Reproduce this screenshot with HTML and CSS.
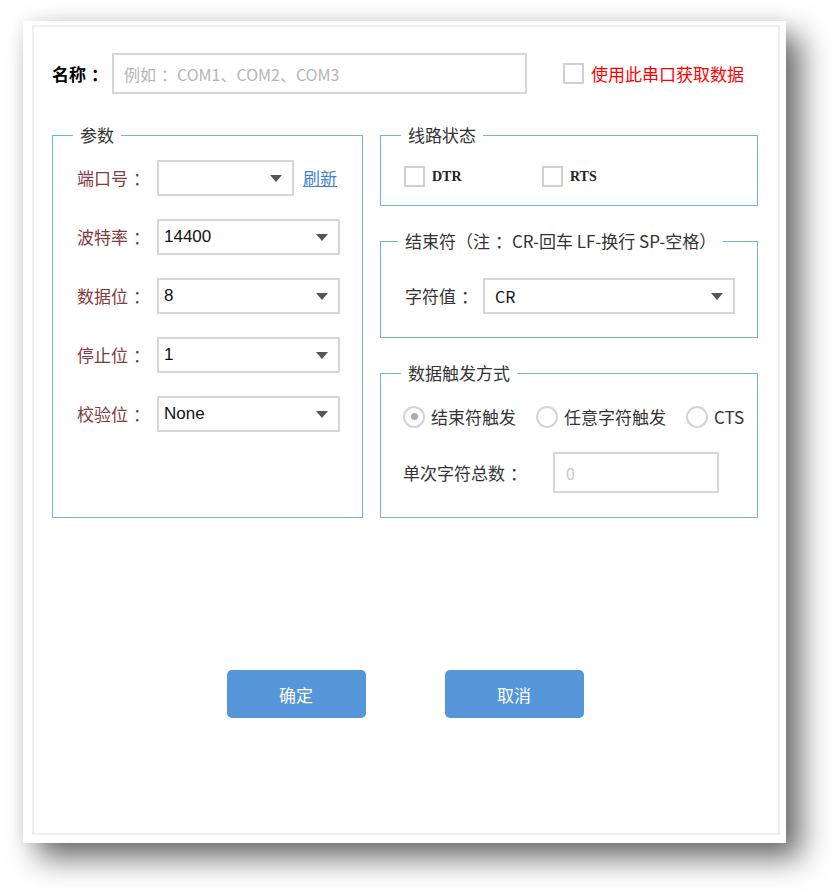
FILE: index.html
```html
<!DOCTYPE html>
<html lang="zh-CN">
<head>
<meta charset="utf-8">
<title>串口设置</title>
<link rel="stylesheet" href="styles.css">
</head>
<body>
<div class="window">
  <div class="frame">
    <div class="name-row">
      <span class="name-label">名称<span class="colon">：</span></span>
      <div class="text-input name-input"><span class="placeholder">例如<span class="colon">：</span>COM1、COM2、COM3</span></div>
      <span class="checkbox"></span>
      <span class="red-label">使用此串口获取数据</span>
    </div>

    <div class="columns">
      <fieldset class="group">
        <legend>参数</legend>
        <div class="params">
          <div class="param-row">
            <span class="param-label">端口号<span class="colon">：</span></span>
            <div class="select select-short"><span class="value"></span><svg class="arrow" width="12" height="7" viewBox="0 0 12 7"><path d="M0 0H12L6 7Z" fill="#555"/></svg></div>
            <a class="refresh" href="#">刷新</a>
          </div>
          <div class="param-row">
            <span class="param-label">波特率<span class="colon">：</span></span>
            <div class="select"><span class="value">14400</span><svg class="arrow" width="12" height="7" viewBox="0 0 12 7"><path d="M0 0H12L6 7Z" fill="#555"/></svg></div>
          </div>
          <div class="param-row">
            <span class="param-label">数据位<span class="colon">：</span></span>
            <div class="select"><span class="value">8</span><svg class="arrow" width="12" height="7" viewBox="0 0 12 7"><path d="M0 0H12L6 7Z" fill="#555"/></svg></div>
          </div>
          <div class="param-row">
            <span class="param-label">停止位<span class="colon">：</span></span>
            <div class="select"><span class="value">1</span><svg class="arrow" width="12" height="7" viewBox="0 0 12 7"><path d="M0 0H12L6 7Z" fill="#555"/></svg></div>
          </div>
          <div class="param-row">
            <span class="param-label">校验位<span class="colon">：</span></span>
            <div class="select"><span class="value">None</span><svg class="arrow" width="12" height="7" viewBox="0 0 12 7"><path d="M0 0H12L6 7Z" fill="#555"/></svg></div>
          </div>
        </div>
      </fieldset>

      <div class="right-col">
        <fieldset class="group">
          <legend>线路状态</legend>
          <div class="line-state">
            <div class="check-item"><span class="checkbox"></span><span class="mono">DTR</span></div>
            <div class="check-item"><span class="checkbox"></span><span class="mono">RTS</span></div>
          </div>
        </fieldset>

        <fieldset class="group">
          <legend class="legend-end">结束符（注<span class="colon">：</span>CR-回车 LF-换行 SP-空格）</legend>
          <div class="end-char">
            <span class="plain-label">字符值<span class="colon">：</span></span>
            <div class="select select-wide"><span class="value">CR</span><svg class="arrow" width="12" height="7" viewBox="0 0 12 7"><path d="M0 0H12L6 7Z" fill="#555"/></svg></div>
          </div>
        </fieldset>

        <fieldset class="group">
          <legend>数据触发方式</legend>
          <div class="trigger">
            <div class="radio-row">
              <span class="radio checked"></span><span class="radio-label">结束符触发</span>
              <span class="radio"></span><span class="radio-label">任意字符触发</span>
              <span class="radio"></span><span class="radio-label last">CTS</span>
            </div>
            <div class="count-row">
              <span class="plain-label">单次字符总数<span class="colon">：</span></span>
              <div class="text-input count-input"><span class="disabled-val">0</span></div>
            </div>
          </div>
        </fieldset>
      </div>
    </div>

    <div class="buttons">
      <button class="btn">确定</button>
      <button class="btn">取消</button>
    </div>
  </div>
</div>
</body>
</html>
```

FILE: styles.css
```css
* { box-sizing: border-box; }

html, body {
  margin: 0;
  padding: 0;
  background: #ffffff;
}

body {
  font-family: "Noto Sans CJK SC", "Noto Sans", sans-serif;
  font-size: 17px;
  color: #333;
  line-height: 20px;
  min-height: 896px;
  overflow: hidden;
}

/* centre the full-width colon in its cell */
.colon {
  padding-left: 5px;
}

.window {
  margin: 21px 0 0 23px;
  width: 763px;
  height: 822px;
  background: #ffffff;
  padding: 4px 6px 8px 9px;
  box-shadow: 15px 15px 28px rgba(0, 0, 0, 0.58), 0 0 14px rgba(0, 0, 0, 0.07);
}

.frame {
  height: 100%;
  border: 2px solid #eeeeee;
  padding: 26px 20px 0 18px;
}

/* name row */
.name-row {
  display: flex;
  align-items: center;
  height: 41px;
}

.name-label {
  width: 60px;
  font-weight: bold;
  color: #000;
}

.text-input {
  height: 41px;
  border: 2px solid #d6d6d6;
  display: flex;
  align-items: center;
  padding-left: 10px;
}

.name-input {
  width: 415px;
}

.placeholder {
  color: #b4b4b4;
  font-size: 16px;
}

.checkbox {
  display: inline-block;
  width: 21px;
  height: 21px;
  border: 2px solid #d0d0d0;
  background: #fff;
  flex: none;
}

.name-row .checkbox {
  margin-left: 36px;
}

.red-label {
  margin-left: 7px;
  color: #ff0000;
}

/* columns */
.columns {
  margin-top: 31px;
  display: grid;
  grid-template-columns: 311px 378px;
  column-gap: 17px;
}

.group {
  margin: 0;
  padding: 0;
  border: 1px solid #6fb4df;
  min-width: 0;
}

.group legend {
  margin-left: 20px;
  padding: 0 7px;
  line-height: 20px;
  color: #333;
}

.group .legend-end {
  margin-left: 17px;
  padding: 0 7px;
}

.right-col {
  display: flex;
  flex-direction: column;
  gap: 25px;
}

/* params */
.params {
  padding: 15px 0 0 24px;
  display: flex;
  flex-direction: column;
  gap: 23px;
}

.param-row {
  display: flex;
  align-items: center;
  height: 36px;
}

.param-label {
  width: 80px;
  color: #823a3a;
}

.select {
  width: 183px;
  height: 36px;
  border: 2px solid #d6d6d6;
  display: flex;
  align-items: center;
  justify-content: space-between;
  padding: 0 10px 0 5px;
  background: #fff;
}

.select .value {
  font-family: "Liberation Sans", "Noto Sans CJK SC", sans-serif;
  font-size: 17px;
  color: #111;
}

.select-short {
  width: 137px;
}

.select-wide {
  width: 252px;
}

.select-wide .value {
  padding-left: 5px;
  font-family: "Noto Sans CJK SC", sans-serif;
  font-size: 16px;
}

.arrow {
  flex: none;
}

.refresh {
  margin-left: 9px;
  color: #3d82d6;
  text-decoration: underline;
}

/* line state */
.line-state {
  display: flex;
  padding: 21px 0 18px 23px;
}

.check-item {
  width: 138px;
  display: flex;
  align-items: center;
  height: 21px;
}

.mono {
  margin-left: 7px;
  font-family: "Liberation Serif", serif;
  font-weight: bold;
  font-size: 14px;
  color: #222;
}

/* end char */
.end-char {
  display: flex;
  align-items: center;
  padding: 27px 0 23px 24px;
}

.plain-label {
  color: #333;
}

.end-char .plain-label {
  width: 78px;
}

/* trigger */
.trigger {
  padding: 23px 0 24px 22px;
  display: flex;
  flex-direction: column;
  gap: 25px;
}

.radio-row {
  display: flex;
  align-items: center;
  height: 21px;
}

.radio {
  width: 22px;
  height: 22px;
  border: 2px solid #d4d4d4;
  border-radius: 50%;
  display: flex;
  align-items: center;
  justify-content: center;
  flex: none;
}

.radio.checked::after {
  content: "";
  width: 7px;
  height: 7px;
  border-radius: 50%;
  background: #acacac;
}

.radio-label {
  margin-left: 6px;
  margin-right: 20px;
  color: #333;
}

.radio-label.last {
  margin-right: 0;
}

.count-row {
  display: flex;
  align-items: center;
  height: 41px;
}

.count-row .plain-label {
  width: 150px;
}

.count-input {
  width: 166px;
  padding-left: 11px;
}

.disabled-val {
  color: #c8c8c8;
  font-size: 16px;
}

/* buttons */
.buttons {
  margin-top: 152px;
  display: flex;
  justify-content: center;
  gap: 79px;
}

.btn {
  width: 139px;
  height: 48px;
  border: none;
  border-radius: 5px;
  background: #5596d8;
  color: #ffffff;
  font-family: "Noto Sans CJK SC", sans-serif;
  font-size: 17px;
  padding: 0;
}
```
